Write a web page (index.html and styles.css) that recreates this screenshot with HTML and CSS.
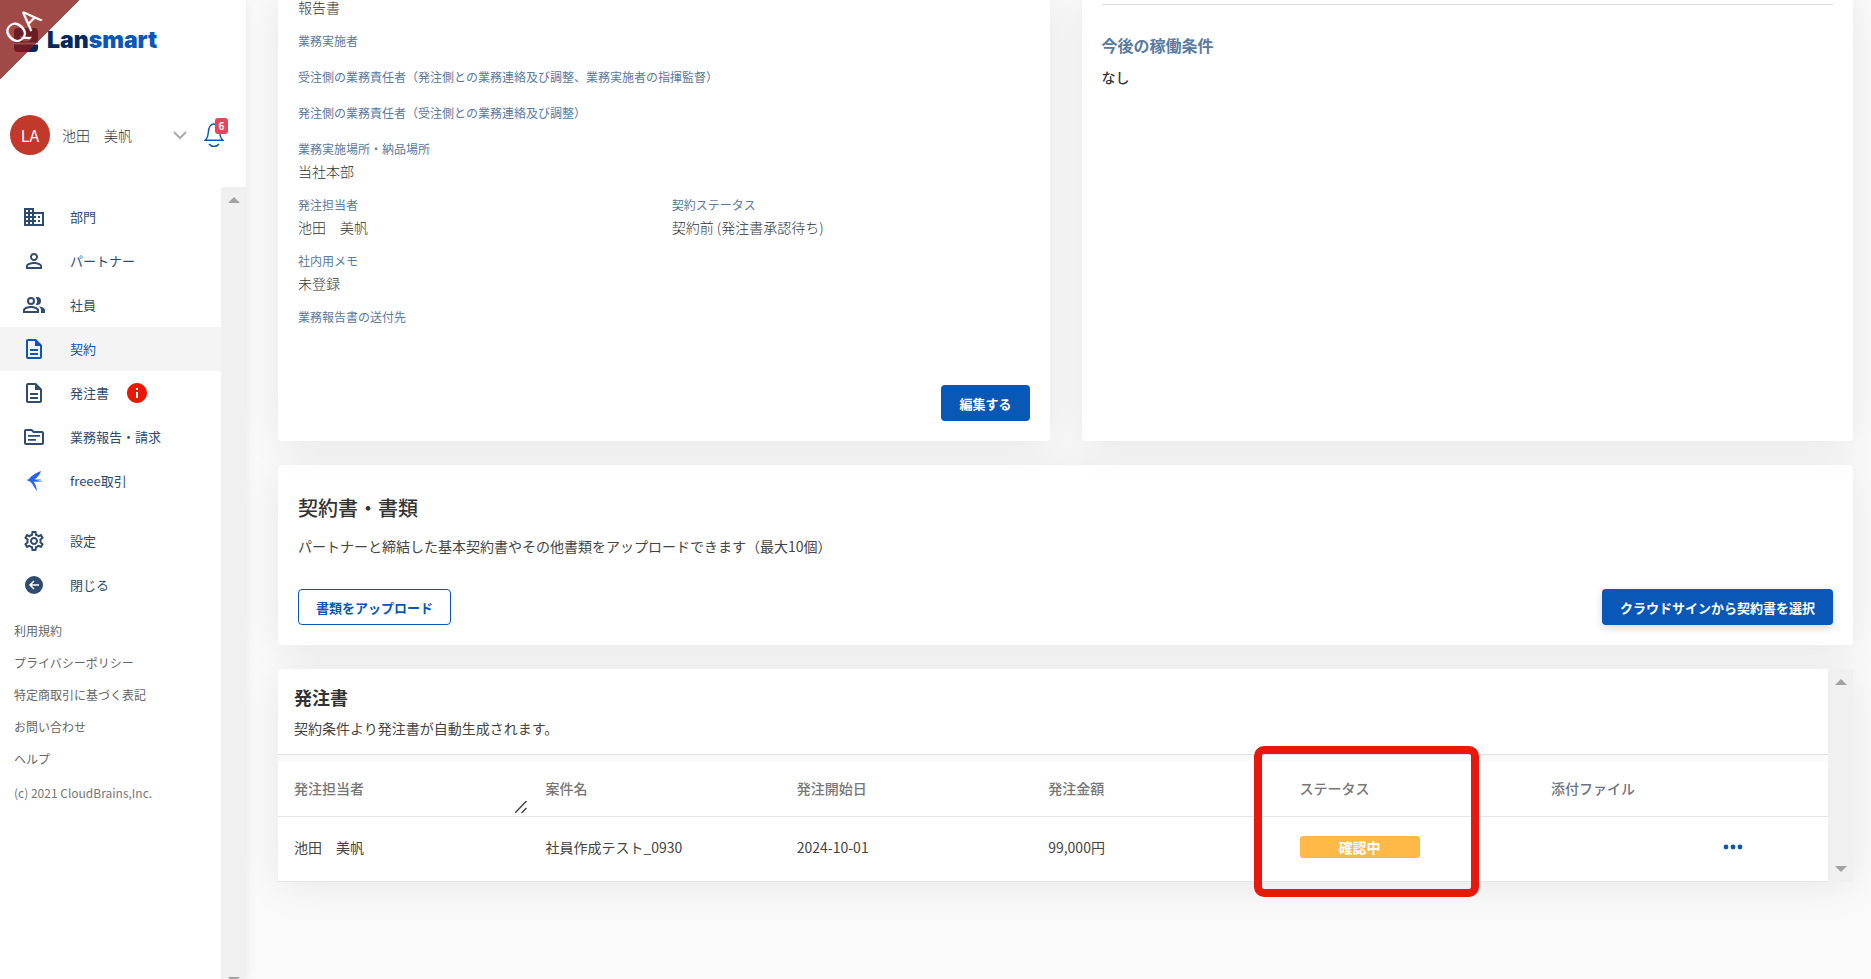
FILE: index.html
```
<!DOCTYPE html>
<html lang="ja">

<head>
    <meta charset="UTF-8">
    <meta name="viewport" content="width=device-width, initial-scale=1.0">
    <title>Lansmart</title>
    <link rel="stylesheet" href="styles.css">
</head>

<body>
    <div class="ribbon"><span>QA</span></div>

    <div class="layout">
        <aside class="sidebar">
            <div class="logo">
                <svg width="24" height="24" viewBox="0 0 24 24">
                    <rect width="24" height="24" rx="4" fill="#04285c" />
                    <path d="M0 15.5h24M7 8c1 6 9 6 10 0" fill="none" stroke="#fff" stroke-width="2" />
                </svg>
                <span class="logo-text">Lan<span class="logo-blue">smart</span></span>
            </div>

            <div class="user">
                <span class="avatar">LA</span>
                <span class="user-name">池田　美帆</span>
                <button type="button" class="icon-button" aria-label="メニュー">
                    <svg width="14" height="9" viewBox="0 0 14 9">
                        <path d="M1 1l6 6 6-6" fill="none" stroke="#a9adb3" stroke-width="2" />
                    </svg>
                </button>
                <button type="button" class="icon-button bell" aria-label="通知">
                    <svg width="20" height="26" viewBox="0 0 20 26" fill="none" stroke="#0957b6" stroke-width="1.4">
                        <path d="M1 18.3h18c-2.400-1.800-2.900-4-3.200-7.300C15.400 5.600 13.700 2 10 2S4.600 5.600 4.200 11C3.900 14.300 3.400 16.500 1 18.300z" />
                        <path d="M5 22c2.500 3.200 7.500 3.200 10 0" />
                    </svg>
                    <span class="bell-count">6</span>
                </button>
            </div>

            <div class="menu">
                <div class="menu-body">
                    <nav class="nav">
                        <a href="#">
                            <svg viewBox="0 0 24 24"><path d="M12 7V3H2v18h20V7H12zM6 19H4v-2h2v2zm0-4H4v-2h2v2zm0-4H4V9h2v2zm0-4H4V5h2v2zm4 12H8v-2h2v2zm0-4H8v-2h2v2zm0-4H8V9h2v2zm0-4H8V5h2v2zm10 12h-8v-2h2v-2h-2v-2h2v-2h-2V9h8v10zm-2-8h-2v2h2v-2zm0 4h-2v2h2v-2z" /></svg>
                            部門
                        </a>
                        <a href="#">
                            <svg viewBox="0 0 24 24"><path d="M12 5.900c1.160 0 2.100.94 2.100 2.100s-.94 2.100-2.100 2.100S9.900 9.160 9.900 8s.94-2.100 2.100-2.100m0 9c2.970 0 6.100 1.460 6.100 2.100v1.100H5.900V17c0-.64 3.130-2.100 6.100-2.100M12 4C9.790 4 8 5.790 8 8s1.790 4 4 4 4-1.790 4-4-1.790-4-4-4zm0 9c-2.670 0-8 1.340-8 4v3h16v-3c0-2.660-5.330-4-8-4z" /></svg>
                            パートナー
                        </a>
                        <a href="#">
                            <svg viewBox="0 0 24 24"><path d="M9 4a4 4 0 1 0 0 8 4 4 0 0 0 0-8zm0 2a2 2 0 1 1 0 4 2 2 0 0 1 0-4zM9 13c-2.670 0-8 1.340-8 4v3h16v-3c0-2.660-5.330-4-8-4zm6 5H3v-1c.2-.72 3.300-2 6-2s5.800 1.280 6 2v1zM15 12a4 4 0 0 0 0-8c-.47 0-.91.1-1.330.24a6 6 0 0 1 0 7.520c.42.14.86.24 1.330.24zM16.670 13.130C18.040 14.060 19 15.320 19 17v3h4v-3c0-2.180-3.580-3.470-6.330-3.870z" /></svg>
                            社員
                        </a>
                        <a href="#" class="active">
                            <svg viewBox="0 0 24 24"><path d="M8 16h8v2H8zm0-4h8v2H8zm6-10H6c-1.100 0-2 .9-2 2v16c0 1.100.89 2 1.990 2H18c1.100 0 2-.9 2-2V8l-6-6zm4 18H6V4h7v5h5v11z" /></svg>
                            契約
                        </a>
                        <a href="#">
                            <svg viewBox="0 0 24 24"><path d="M8 16h8v2H8zm0-4h8v2H8zm6-10H6c-1.100 0-2 .9-2 2v16c0 1.100.89 2 1.990 2H18c1.100 0 2-.9 2-2V8l-6-6zm4 18H6V4h7v5h5v11z" /></svg>
                            発注書
                            <svg class="alert" viewBox="0 0 24 24"><path d="M12 2C6.480 2 2 6.480 2 12s4.480 10 10 10 10-4.480 10-10S17.520 2 12 2zm1 15h-2v-6h2v6zm0-8h-2V7h2v2z" /></svg>
                        </a>
                        <a href="#">
                            <svg viewBox="0 0 24 24"><path d="M20 6h-8l-2-2H4c-1.100 0-1.990.9-1.990 2L2 18c0 1.100.9 2 2 2h16c1.100 0 2-.9 2-2V8c0-1.100-.9-2-2-2zm0 12H4V6h5.170l2 2H20v10zM6 10h12v1.800H6zm0 4h8v1.800H6z" /></svg>
                            業務報告・請求
                        </a>
                        <a href="#">
                            <svg class="freee" viewBox="0 0 24 24"><path d="M19 2C13 4 9 7 7 10L4.500 11 8 12.600c3 2.400 4 6.400 7 9.400-.5-4-1.500-7-3.500-9.200l8.500-.2v-.8l-5-.2 5-1h-7.500C15.500 8.500 18 5.500 19 2z" /></svg>
                            freee取引
                        </a>
                    </nav>
                    <nav class="nav">
                        <a href="#">
                            <svg viewBox="0 0 24 24"><path d="M19.430 12.980c.04-.32.07-.64.07-.98s-.03-.66-.07-.98l2.110-1.650c.19-.15.24-.42.12-.64l-2-3.460c-.09-.16-.26-.25-.44-.25-.06 0-.12.010-.17.030l-2.490 1c-.52-.4-1.080-.73-1.690-.98l-.38-2.650C14.460 2.180 14.250 2 14 2h-4c-.25 0-.46.18-.49.42l-.38 2.650c-.61.25-1.170.59-1.690.98l-2.490-1c-.06-.02-.12-.03-.18-.03-.17 0-.34.090-.43.250l-2 3.460c-.13.220-.07.490.12.640l2.110 1.650c-.04.320-.07.650-.07.980s.03.660.07.980l-2.110 1.650c-.19.150-.24.420-.12.640l2 3.460c.09.160.26.250.44.250.06 0 .12-.01.17-.03l2.490-1c.52.400 1.080.730 1.690.980l.38 2.650c.03.240.24.420.49.420h4c.25 0 .46-.18.49-.42l.38-2.650c.61-.25 1.170-.59 1.690-.98l2.490 1c.06.020.12.030.18.030.17 0 .34-.09.43-.25l2-3.460c.12-.22.070-.49-.12-.64l-2.110-1.650zm-1.980-1.710c.04.310.05.520.05.730 0 .21-.02.430-.05.730l-.14 1.130.89.700 1.080.840-.7 1.210-1.270-.51-1.040-.42-.9.680c-.43.320-.84.560-1.250.73l-1.060.430-.16 1.130-.2 1.350h-1.400l-.19-1.350-.16-1.130-1.060-.43c-.43-.18-.83-.41-1.230-.71l-.91-.7-1.060.43-1.270.51-.7-1.210 1.080-.84.89-.7-.14-1.130c-.03-.31-.05-.54-.05-.74s.02-.43.05-.73l.14-1.130-.89-.7-1.080-.84.7-1.210 1.270.51 1.040.42.9-.68c.43-.32.84-.56 1.250-.73l1.060-.43.16-1.130.2-1.350h1.390l.19 1.350.16 1.130 1.060.43c.43.180.83.410 1.230.71l.91.7 1.060-.43 1.270-.51.7 1.210-1.070.85-.89.7.14 1.130zM12 8c-2.210 0-4 1.790-4 4s1.790 4 4 4 4-1.790 4-4-1.790-4-4-4zm0 6c-1.100 0-2-.9-2-2s.9-2 2-2 2 .9 2 2-.9 2-2 2z" /></svg>
                            設定
                        </a>
                        <a href="#">
                            <svg viewBox="0 0 24 24"><circle cx="12" cy="12" r="9" /><path d="M17 12H8m4-4l-4 4 4 4" fill="none" stroke="#fff" stroke-width="1.500" /></svg>
                            閉じる
                        </a>
                    </nav>
                    <div class="links">
                        <a href="#">利用規約</a>
                        <a href="#">プライバシーポリシー</a>
                        <a href="#">特定商取引に基づく表記</a>
                        <a href="#">お問い合わせ</a>
                        <a href="#">ヘルプ</a>
                        <small>(c) 2021 CloudBrains,Inc.</small>
                    </div>
                </div>
                <div class="scrollbar">
                    <span class="arrow-up"></span>
                    <span class="arrow-down"></span>
                </div>
            </div>
        </aside>

        <main class="main">
            <div class="row">
                <section class="card detail">
                    <dl class="fields">
                        <div class="field wide">
                            <dd>報告書</dd>
                        </div>
                        <div class="field wide">
                            <dt>業務実施者</dt>
                        </div>
                        <div class="field wide">
                            <dt>受注側の業務責任者（発注側との業務連絡及び調整、業務実施者の指揮監督）</dt>
                        </div>
                        <div class="field wide">
                            <dt>発注側の業務責任者（受注側との業務連絡及び調整）</dt>
                        </div>
                        <div class="field wide">
                            <dt>業務実施場所・納品場所</dt>
                            <dd>当社本部</dd>
                        </div>
                        <div class="field">
                            <dt>発注担当者</dt>
                            <dd>池田　美帆</dd>
                        </div>
                        <div class="field">
                            <dt>契約ステータス</dt>
                            <dd>契約前 (発注書承認待ち)</dd>
                        </div>
                        <div class="field wide">
                            <dt>社内用メモ</dt>
                            <dd>未登録</dd>
                        </div>
                        <div class="field wide">
                            <dt>業務報告書の送付先</dt>
                        </div>
                    </dl>
                    <button type="button" class="button edit">編集する</button>
                </section>

                <section class="card conditions">
                    <h3>今後の稼働条件</h3>
                    <p>なし</p>
                </section>
            </div>

            <section class="card documents">
                <h2>契約書・書類</h2>
                <p>パートナーと締結した基本契約書やその他書類をアップロードできます（最大10個）</p>
                <div class="actions">
                    <button type="button" class="button outline">書類をアップロード</button>
                    <button type="button" class="button raised">クラウドサインから契約書を選択</button>
                </div>
            </section>

            <section class="card orders">
                <div class="orders-body">
                    <div class="orders-head">
                        <h2>発注書</h2>
                        <p>契約条件より発注書が自動生成されます。</p>
                    </div>
                    <table>
                        <thead>
                            <tr>
                                <th>発注担当者
                                    <svg class="resize" width="12" height="12" viewBox="0 0 12 12"><path d="M0 12L11.500 0M6.500 12l5-5" stroke="#444" stroke-width="1.500" /></svg>
                                </th>
                                <th>案件名</th>
                                <th>発注開始日</th>
                                <th>発注金額</th>
                                <th>ステータス<span class="highlight"></span></th>
                                <th class="files">添付ファイル</th>
                                <th class="more"></th>
                            </tr>
                        </thead>
                        <tbody>
                            <tr>
                                <td>池田　美帆</td>
                                <td>社員作成テスト_0930</td>
                                <td>2024-10-01</td>
                                <td>99,000円</td>
                                <td><span class="status">確認中</span></td>
                                <td></td>
                                <td>
                                    <button type="button" class="icon-button" aria-label="その他">
                                        <svg width="20" height="6" viewBox="0 0 20 6" fill="#0957b6">
                                            <circle cx="3" cy="3" r="2.400" />
                                            <circle cx="10" cy="3" r="2.400" />
                                            <circle cx="17" cy="3" r="2.400" />
                                        </svg>
                                    </button>
                                </td>
                            </tr>
                        </tbody>
                    </table>
                </div>
                <div class="scrollbar">
                    <span class="arrow-up"></span>
                    <span class="arrow-down"></span>
                </div>
            </section>
        </main>
    </div>
</body>

</html>
```

FILE: styles.css
```
* {
    box-sizing: border-box;
}

body {
    margin: 0;
    background-color: #fafafa;
    color: #333;
    font-family: "Noto Sans CJK JP", sans-serif;
    font-size: 14px;
    line-height: 24px;
    overflow: hidden;
}

h2, h3, p, dl, dd {
    margin: 0;
}

a {
    text-decoration: none;
}

button {
    font-family: inherit;
    cursor: pointer;
}

.layout {
    display: flex;
    height: 100vh;
}

/* environment ribbon */
.ribbon {
    position: absolute;
    top: 0;
    left: 0;
    z-index: 2;
    width: 80px;
    height: 80px;
    padding: 14px 2px;
    background: linear-gradient(135deg, rgba(135, 26, 22, 0.79) 50%, transparent 50%);
}

.ribbon span {
    display: block;
    width: 40px;
    color: #fff;
    font-family: "Open Sans", sans-serif;
    font-size: 27px;
    line-height: 24px;
    text-align: center;
    transform: rotate(-45deg);
}

/* sidebar */
.sidebar {
    display: flex;
    flex-direction: column;
    flex: none;
    width: 246px;
    background-color: #fff;
    box-shadow: 0 0 10px rgba(0, 0, 0, 0.08);
}

.logo {
    display: flex;
    align-items: center;
    gap: 9px;
    padding: 28px 14px 0;
}

.logo-text {
    color: #04285c;
    font-family: Inter, sans-serif;
    font-size: 23px;
    font-weight: 900;
}

.logo-blue {
    color: #0957b6;
}

.user {
    display: flex;
    align-items: center;
    padding: 63px 22px 32px 10px;
}

.avatar {
    width: 40px;
    height: 40px;
    margin-right: 12px;
    border-radius: 50%;
    background-color: #c0392b;
    color: #fff;
    font-size: 16px;
    line-height: 40px;
    text-align: center;
}

.user-name {
    flex: 1;
    font-weight: 300;
}

.icon-button {
    display: block;
    padding: 0;
    border: none;
    background: none;
    line-height: 0;
}

.bell {
    position: relative;
    margin-left: 17px;
}

.bell-count {
    position: absolute;
    top: -4px;
    right: -4px;
    width: 13px;
    border-radius: 3px;
    background-color: #e5475a;
    color: #fff;
    font-size: 10px;
    font-weight: 700;
    line-height: 16px;
}

.menu {
    display: flex;
    flex: none;
    height: 806px;
}

.menu-body {
    flex: 1;
    padding-top: 8px;
}

.nav {
    margin-bottom: 16px;
}

.nav a {
    display: flex;
    align-items: center;
    height: 44px;
    padding-left: 22px;
    color: #2f4b6e;
    font-size: 13px;
}

.nav svg {
    width: 24px;
    height: 24px;
    margin-right: 24px;
    fill: #2f4b6e;
}

.nav a.active {
    background-color: #f4f4f4;
    color: #0957b6;
}

.nav .active svg {
    fill: #0957b6;
}

.nav .freee {
    fill: #2864f0;
}

.nav .alert {
    margin: 0 0 0 16px;
    fill: #eb1700;
}

.links {
    display: flex;
    flex-direction: column;
    gap: 8px;
    margin-top: -4px;
    padding-left: 14px;
    font-size: 12px;
}

.links a {
    color: #666;
}

.links small {
    padding-top: 2px;
    color: #777;
    font-size: 12px;
}

.scrollbar {
    display: flex;
    flex-direction: column;
    justify-content: space-between;
    align-items: center;
    width: 25px;
    padding: 10px 0;
    background-color: #f0f0f0;
}

.arrow-up,
.arrow-down {
    border: 6px solid transparent;
    border-top: none;
    border-bottom-color: #a2a2a2;
}

.arrow-down {
    transform: rotate(180deg);
}

/* main area */
.main {
    flex: 1;
    padding: 0 18px 0 32px;
}

.card {
    margin-bottom: 24px;
    border-radius: 4px;
    background-color: #fff;
    box-shadow: 0 4px 40px rgba(0, 0, 0, 0.08);
}

/* the page is scrolled, so the first row starts above the window */
.row {
    display: grid;
    grid-template-columns: 1fr 1fr;
    gap: 32px;
    margin-top: -5px;
}

.detail {
    padding: 0 20px 20px;
}

.fields {
    display: grid;
    grid-template-columns: 1fr 1fr;
    gap: 12px 16px;
}

.field {
    min-height: 24px;
}

.wide {
    grid-column: 1 / 3;
}

.field dt {
    color: #5a7aa0;
    font-size: 12px;
    line-height: 20px;
}

.field dd {
    font-weight: 300;
}

.button {
    height: 36px;
    padding: 0 18px;
    border: none;
    border-radius: 4px;
    background-color: #0957b6;
    color: #fff;
    font-size: 13px;
    font-weight: 700;
}

.edit {
    display: block;
    margin: 54px 0 0 auto;
}

.outline {
    padding: 0 17px;
    border: 1px solid #0957b6;
    background-color: #fff;
    color: #0957b6;
}

.raised {
    box-shadow: 0 3px 8px rgba(0, 0, 0, 0.15);
}

.conditions {
    padding: 9px 20px;
}

.conditions h3 {
    padding: 28px 0 8px;
    border-top: 1px solid #ddd;
    color: #5a7aa0;
    font-size: 16px;
    font-weight: 700;
}

.conditions p {
    font-weight: 500;
}

.documents {
    padding: 27px 20px 20px;
}

.documents h2 {
    font-size: 20px;
    font-weight: 500;
    line-height: 32px;
}

.documents p {
    padding: 10px 0 31px;
    color: #444;
}

.actions {
    display: flex;
    justify-content: space-between;
}

.orders {
    display: flex;
}

.orders-body {
    flex: 1;
}

.orders-head {
    padding: 15px 16px 14px;
    border-bottom: 1px solid #e0e0e0;
}

.orders-head h2 {
    font-size: 18px;
    font-weight: 700;
    line-height: 26px;
}

.orders-head p {
    padding-top: 6px;
    color: #444;
}

table {
    width: 100%;
    border-collapse: collapse;
    table-layout: fixed;
}

th,
td {
    padding: 0 16px;
    border-bottom: 1px solid #e6e6e6;
    text-align: left;
}

th {
    position: relative;
    height: 61px;
    padding-top: 6px;
    background: linear-gradient(#fafafa 7px, #fff 7px);
    color: #777;
    font-weight: 500;
}

td {
    height: 65px;
    padding-bottom: 4px;
    color: #444;
}

.files {
    width: 172px;
    color: #6c7683;
}

.more {
    width: 121px;
}

.resize {
    position: absolute;
    right: 2px;
    bottom: 3px;
}

.status {
    display: block;
    width: 120px;
    border-radius: 3px;
    background-color: #ffb946;
    color: #fff;
    font-weight: 700;
    line-height: 22px;
    text-align: center;
}

/* frame drawn over the status column */
.highlight {
    position: absolute;
    z-index: 1;
    top: -9px;
    left: -30px;
    width: 225px;
    height: 151px;
    border: 8px solid #e8190c;
    border-radius: 10px;
}
```
